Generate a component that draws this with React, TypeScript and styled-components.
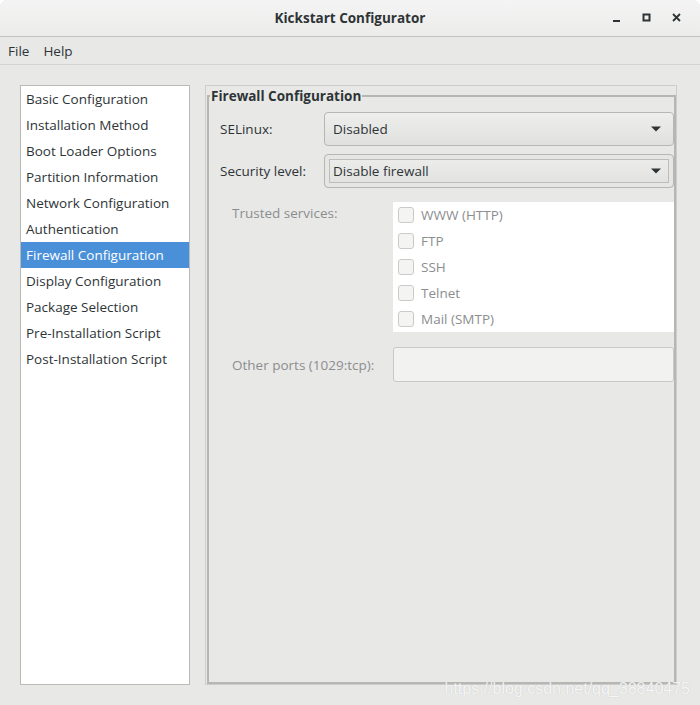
import styled, { createGlobalStyle } from "styled-components";

const GlobalStyle = createGlobalStyle`
  html, body {
    margin: 0;
    padding: 0;
    background: #ffffff;
  }
  * {
    box-sizing: border-box;
  }
`;

const colors = {
  window: "#e8e8e7",
  text: "#2e3436",
  disabled: "#8b8e8f",
  border: "#b6b6b3",
  lightBorder: "#cdcdcb",
  selected: "#4a90d9",
};

const sections = [
  "Basic Configuration",
  "Installation Method",
  "Boot Loader Options",
  "Partition Information",
  "Network Configuration",
  "Authentication",
  "Firewall Configuration",
  "Display Configuration",
  "Package Selection",
  "Pre-Installation Script",
  "Post-Installation Script",
];

const services = ["WWW (HTTP)", "FTP", "SSH", "Telnet", "Mail (SMTP)"];

const ArrowDown = () => (
  <svg width="10" height="6" viewBox="0 0 10 6">
    <path d="M0 0.5 L10 0.5 L5 5.5 Z" fill="#2e3436" />
  </svg>
);

const App = () => {
  return (
    <Window>
      <GlobalStyle />
      <TitleBar>
        <Title>Kickstart Configurator</Title>
        <WindowButtons>
          <WinButton aria-label="minimize">
            <svg width="10" height="10" viewBox="0 0 10 10">
              <rect x="1" y="7" width="7" height="2" fill="#2e3436" />
            </svg>
          </WinButton>
          <WinButton aria-label="maximize">
            <svg width="10" height="10" viewBox="0 0 10 10">
              <rect x="1.5" y="1.5" width="6" height="6" fill="none" stroke="#2e3436" strokeWidth="2" />
            </svg>
          </WinButton>
          <WinButton aria-label="close">
            <svg width="10" height="10" viewBox="0 0 10 10">
              <path d="M1 1 L8 8 M8 1 L1 8" stroke="#2e3436" strokeWidth="1.8" />
            </svg>
          </WinButton>
        </WindowButtons>
      </TitleBar>

      <MenuBar>
        <MenuItem>File</MenuItem>
        <MenuItem>Help</MenuItem>
      </MenuBar>

      <Body>
        <SideList>
          {sections.map((name) => (
            <SideItem key={name} active={name === "Firewall Configuration"}>
              {name}
            </SideItem>
          ))}
        </SideList>

        <Page>
          <Frame>
            <FrameLabel>Firewall Configuration</FrameLabel>
            <TopGrid>
              <FieldLabel>SELinux:</FieldLabel>
              <Combo>
                <span>Disabled</span>
                <ArrowDown />
              </Combo>
              <FieldLabel>Security level:</FieldLabel>
              <Combo focused>
                <span>Disable firewall</span>
                <ArrowDown />
              </Combo>
            </TopGrid>

            <BottomGrid>
              <FieldLabel disabled top>
                Trusted services:
              </FieldLabel>
              <ServiceList>
                {services.map((s) => (
                  <ServiceRow key={s}>
                    <CheckBox />
                    <span>{s}</span>
                  </ServiceRow>
                ))}
              </ServiceList>
              <FieldLabel disabled>Other ports (1029:tcp):</FieldLabel>
              <Entry />
            </BottomGrid>
          </Frame>
        </Page>
      </Body>

      <Watermark>https://blog.csdn.net/qq_38840475</Watermark>
    </Window>
  );
};

const Window = styled.div`
  position: relative;
  width: 700px;
  height: 705px;
  display: flex;
  flex-direction: column;
  background: ${colors.window};
  border-radius: 7px 7px 0 0;
  overflow: hidden;
  font-family: "Open Sans", "DejaVu Sans", sans-serif;
  font-size: 13.5px;
  color: ${colors.text};
`;

const TitleBar = styled.div`
  position: relative;
  height: 37px;
  display: flex;
  align-items: center;
  justify-content: center;
  background: linear-gradient(#f4f4f4, #ececeb);
  border-bottom: 1px solid #c2c2c0;
  flex-shrink: 0;
`;

const Title = styled.div`
  font-weight: bold;
  font-size: 13.5px;
`;

const WindowButtons = styled.div`
  position: absolute;
  right: 18px;
  top: 12px;
  display: flex;
  gap: 19px;
`;

const WinButton = styled.div`
  width: 11px;
  height: 11px;
  display: flex;
  align-items: center;
  justify-content: center;
`;

const MenuBar = styled.div`
  height: 28px;
  display: flex;
  align-items: center;
  gap: 14px;
  padding: 0 8px;
  border-bottom: 1px solid #d3d3d1;
  flex-shrink: 0;
`;

const MenuItem = styled.span``;

const Body = styled.div`
  flex: 1;
  display: flex;
  gap: 15px;
  padding: 20px 23px 20px 20px;
  min-height: 0;
`;

const SideList = styled.div`
  width: 170px;
  background: #ffffff;
  border: 1px solid #b9b9b7;
  display: flex;
  flex-direction: column;
`;

const SideItem = styled.div<{ active?: boolean }>`
  height: 26px;
  display: flex;
  align-items: center;
  padding-left: 5px;
  background: ${(p) => (p.active ? colors.selected : "transparent")};
  color: ${(p) => (p.active ? "#ffffff" : colors.text)};
  white-space: nowrap;
`;

const Page = styled.div`
  flex: 1;
  border: 1px solid ${colors.lightBorder};
  padding: 1px 0 0 1px;
  display: flex;
`;

const Frame = styled.fieldset`
  flex: 1;
  margin: 0;
  border: 2px solid ${colors.border};
  padding: 7px 0 0 11px;
  min-width: 0;
`;

const FrameLabel = styled.legend`
  font-weight: bold;
  padding: 0 1px;
  margin-left: -10px;
`;

const TopGrid = styled.div`
  display: grid;
  grid-template-columns: 104px 1fr;
  row-gap: 8px;
  align-items: center;
`;

const FieldLabel = styled.div<{ disabled?: boolean; top?: boolean }>`
  color: ${(p) => (p.disabled ? colors.disabled : colors.text)};
  align-self: ${(p) => (p.top ? "start" : "center")};
  margin-top: ${(p) => (p.top ? "2px" : "0")};
  white-space: nowrap;
`;

const Combo = styled.div<{ focused?: boolean }>`
  height: 34px;
  display: flex;
  align-items: center;
  justify-content: space-between;
  padding: 0 12px 0 8px;
  border: 1px solid ${colors.border};
  border-radius: 4px;
  background: linear-gradient(#eeeeed, #e0e0df);
  box-shadow: ${(p) =>
    p.focused ? "inset 0 0 0 4px #e6e6e5, inset 0 0 0 5px #bdbdbb" : "none"};
`;

const BottomGrid = styled.div`
  display: grid;
  grid-template-columns: 161px 1fr;
  row-gap: 15px;
  margin-top: 14px;
  padding-left: 12px;
  align-items: center;
`;

const ServiceList = styled.div`
  background: #ffffff;
  padding: 0 5px;
  display: flex;
  flex-direction: column;
`;

const ServiceRow = styled.div`
  height: 26px;
  display: flex;
  align-items: center;
  gap: 7px;
  color: ${colors.disabled};
`;

const CheckBox = styled.div`
  width: 16px;
  height: 16px;
  border: 1px solid #cacac8;
  border-radius: 3px;
  background: #f4f4f3;
`;

const Entry = styled.div`
  height: 35px;
  background: #f2f2f1;
  border: 1px solid #c9c9c7;
  border-radius: 3px;
`;

const Watermark = styled.div`
  position: absolute;
  right: 10px;
  bottom: 7px;
  font-family: "Liberation Sans", Arial, sans-serif;
  font-size: 16px;
  color: rgba(255, 255, 255, 0.85);
  text-shadow: 0 0 1px rgba(120, 120, 120, 0.35);
`;

export default App;
